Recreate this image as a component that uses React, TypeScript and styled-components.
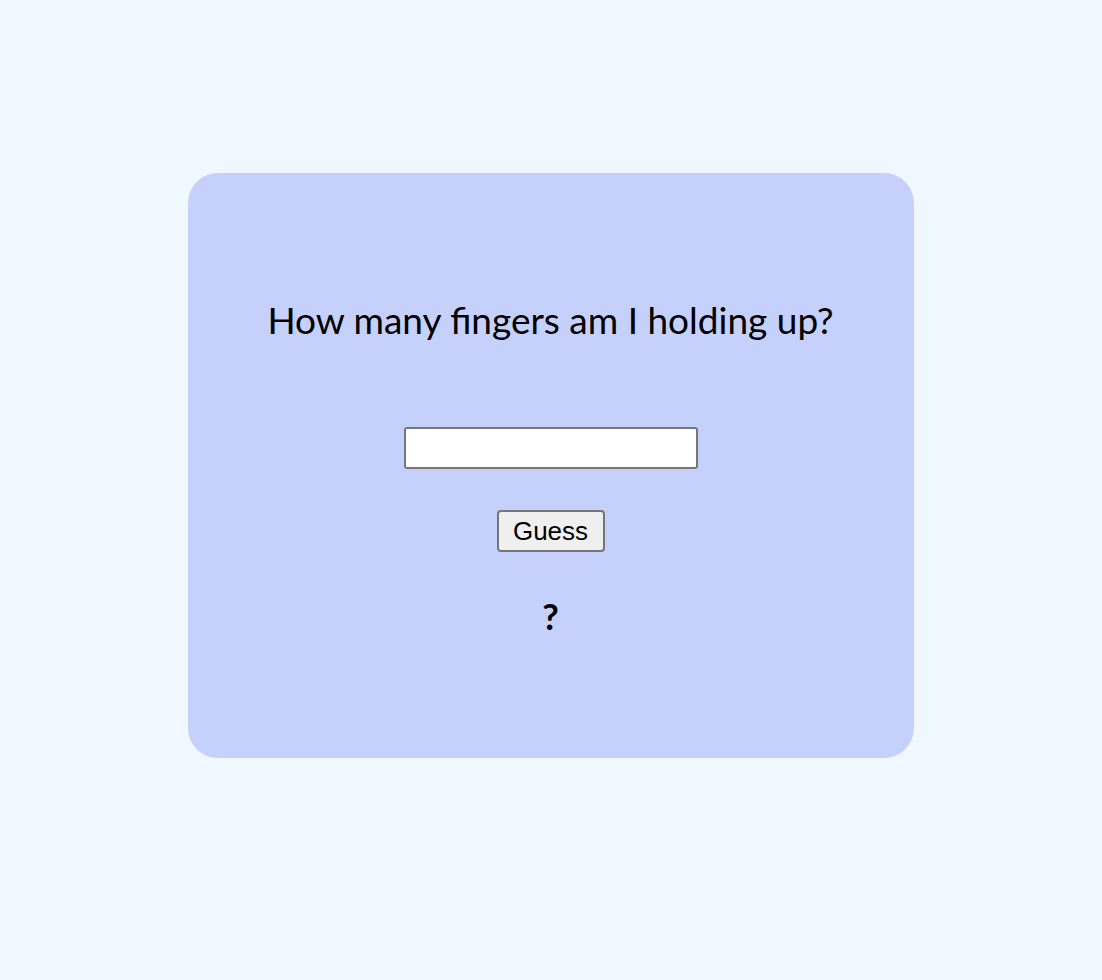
import React, { useState } from "react";
import styled, { createGlobalStyle } from "styled-components";

const Global = createGlobalStyle`
  html, body { margin: 0; padding: 0; background: #f0f8ff; }
  body { font-family: "Lato", "Open Sans", sans-serif; }
`;

const Page = styled.div`
  min-height: 980px;
  display: flex;
  justify-content: center;
  align-items: flex-start;
  padding-top: 173px;
  padding-right: 1px;
  box-sizing: border-box;
`;

const Card = styled.div`
  width: 726px;
  height: 585px;
  box-sizing: border-box;
  background: #c5d1fa;
  border-radius: 30px;
  display: flex;
  flex-direction: column;
  align-items: center;
  padding-top: 120px;
`;

const Title = styled.h1`
  margin: 0;
  font-family: "Lato", sans-serif;
  font-weight: 400;
  font-size: 37px;
  line-height: 54px;
  color: #000;
`;

const Input = styled.input`
  margin-top: 80px;
  width: 294px;
  height: 42px;
  box-sizing: border-box;
  border: 2px solid #767676;
  border-radius: 3px;
  background: #fff;
  font-size: 22px;
  font-family: "Liberation Sans", Arial, sans-serif;
  padding: 0 4px;
`;

const Button = styled.button`
  margin-top: 41px;
  width: 108px;
  height: 42px;
  box-sizing: border-box;
  border: 2px solid #767676;
  border-radius: 4px;
  background: #efefef;
  font-family: "Liberation Sans", Arial, sans-serif;
  font-size: 26px;
  color: #000;
  padding: 0;
  cursor: pointer;
`;

const Result = styled.div`
  margin-top: 42px;
  font-family: "Lato", sans-serif;
  font-weight: 700;
  font-size: 36px;
  line-height: 44px;
  color: #000;
`;

export default function App() {
  const [val, setVal] = useState("");
  return (
    <>
      <Global />
      <Page>
        <Card>
          <Title>How many fingers am I holding up?</Title>
          <Input value={val} onChange={(e) => setVal(e.target.value)} />
          <Button>Guess</Button>
          <Result>?</Result>
        </Card>
      </Page>
    </>
  );
}
